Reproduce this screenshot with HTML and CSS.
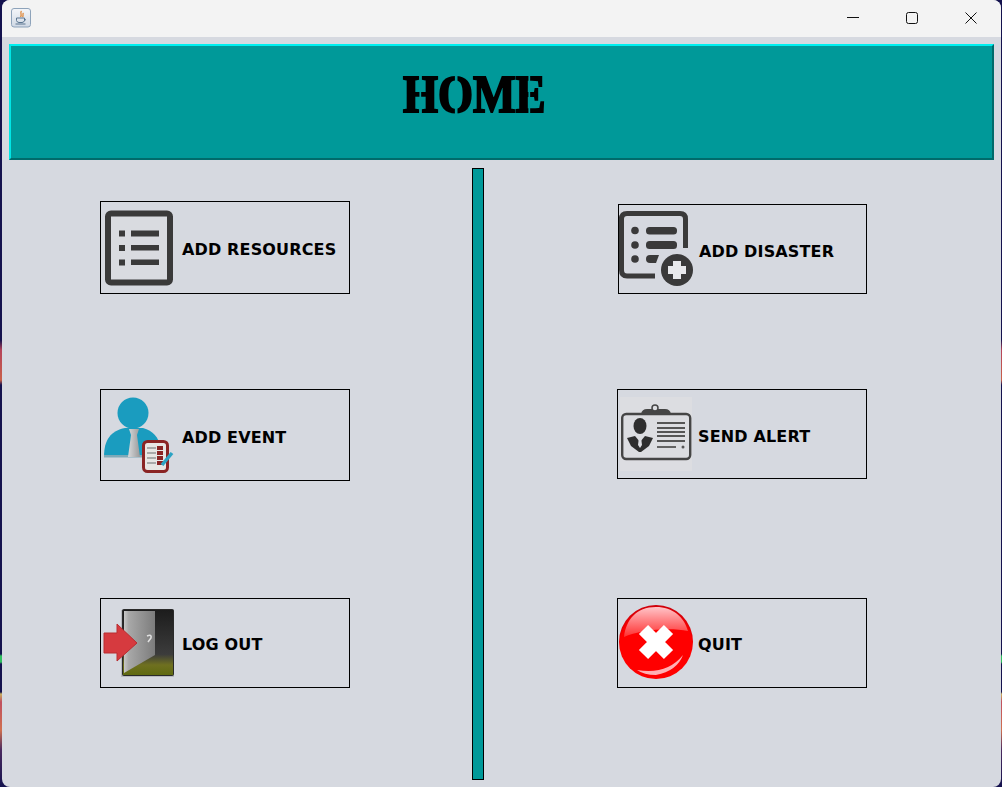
FILE: index.html
```html
<!DOCTYPE html>
<html lang="en">
<head>
<meta charset="utf-8">
<title>Home</title>
<link rel="stylesheet" href="styles.css">
</head>
<body>
<div class="window">
  <div class="titlebar">
    <svg class="app-icon" width="20" height="20" viewBox="0 0 20 20">
      <defs><linearGradient id="ja" x1="0" y1="0" x2="0" y2="1"><stop offset="0" stop-color="#f4f6f9"/><stop offset="1" stop-color="#cfd8e4"/></linearGradient></defs>
      <rect x="0.5" y="0.5" width="19" height="18.5" rx="2.5" fill="url(#ja)" stroke="#8ea3ba"/>
      <path d="M10.5 3 C8.5 5 11.5 6 9.5 9 M12.5 5 C11 6.5 13 7 11.5 9" fill="none" stroke="#e08a3c" stroke-width="1.3"/>
      <path d="M5.5 10 H13.5 V12.5 Q13 14.5 11 14.5 H8 Q6 14.5 5.5 12.5 Z M13.5 10.5 Q15.5 11 13.5 13" fill="none" stroke="#5a7590" stroke-width="1"/>
      <path d="M4.5 16 H14.5" stroke="#5a7590" stroke-width="1"/>
    </svg>
    <div class="controls">
      <svg class="ctl" width="12" height="12" viewBox="0 0 12 12"><path d="M0 5.5H12" stroke="#111"/></svg>
      <svg class="ctl" width="12" height="12" viewBox="0 0 12 12"><rect x="0.5" y="0.5" width="11" height="11" rx="2" fill="none" stroke="#111"/></svg>
      <svg class="ctl" width="12" height="12" viewBox="0 0 12 12"><path d="M0.5 0.5L11.5 11.5M11.5 0.5L0.5 11.5" stroke="#111"/></svg>
    </div>
  </div>

  <header class="banner"><h1 class="title">HOME</h1></header>

  <main class="panels">
    <section class="col col-left">
      <div class="btn b-res">
        <svg class="ico" viewBox="0 0 80 80"><rect x="7" y="5.5" width="62" height="69" rx="3" fill="#d9dbe0" stroke="#3a3a3a" stroke-width="6"/><path d="M18 22.5h6v6h-6zM18 37h6v6h-6zM18 51.5h6v6h-6zM30 22.5h28v6H30zM30 37h28v5.500H30zM30 51.500h28v5.500H30z" fill="#3a3a3a"/></svg>
        <span class="lbl">ADD RESOURCES</span>
      </div>
      <div class="btn b-event">
        <svg class="ico" viewBox="0 0 80 80">
          <defs><linearGradient id="tie" x1="0" y1="0" x2="1" y2="0"><stop offset="0" stop-color="#d8dadc"/><stop offset="1" stop-color="#9a9a9a"/></linearGradient></defs>
          <circle cx="32" cy="18" r="15.500" fill="#1a9cbf"/>
          <path d="M3 62 C3 44 10 36 24 33 L42 33 C52 36 58 42 59 52 L59 62 Z" fill="#1a9cbf"/>
          <path d="M3 60h56v2.500H3z" fill="#7ea9b8"/>
          <path d="M28 34H38L36 40 39 62H27L30 40Z" fill="url(#tie)"/>
          <rect x="42.500" y="46.500" width="24" height="30" rx="4" fill="#e8e6e4" stroke="#8a2424" stroke-width="3"/>
          <path d="M46 52h9v2h-9zM46 57h9v2h-9zM46 62h9v2h-9zM46 67h9v2h-9z" fill="#a9a9a9"/>
          <path d="M56 51h6v4h-6zM56 56h6v4h-6zM56 61h6v4h-6zM56 66h6v4h-6z" fill="#8a2424"/>
          <path d="M61 70L71 58" stroke="#2ba3c4" stroke-width="3.500"/>
        </svg>
        <span class="lbl">ADD EVENT</span>
      </div>
      <div class="btn b-out">
        <svg class="ico" viewBox="0 0 80 80">
          <defs>
            <linearGradient id="dr" x1="0" y1="0" x2="0" y2="1"><stop offset="0" stop-color="#1c1c1c"/><stop offset="0.68" stop-color="#3c3c3c"/><stop offset="0.84" stop-color="#6f7020"/><stop offset="1" stop-color="#5f6a10"/></linearGradient>
            <linearGradient id="pn" x1="0" y1="0" x2="1" y2="0"><stop offset="0" stop-color="#c8c8c8"/><stop offset="0.15" stop-color="#a8a8a8"/><stop offset="1" stop-color="#7c7c7c"/></linearGradient>
          </defs>
          <rect x="20" y="7" width="53" height="67" fill="#b8bac0"/>
          <rect x="21.500" y="6.500" width="51" height="66" rx="1" fill="url(#dr)" stroke="#2a2a2a"/>
          <path d="M23 8H54V52L23 70Z" fill="url(#pn)"/>
          <path d="M46 33q5-2 4 2l-3 4" fill="none" stroke="#e0e0e0" stroke-width="1.600"/>
          <path d="M3 30H16V21L36 40 16 58V50H3Z" fill="#d63a3f" stroke="#b92c30"/>
        </svg>
        <span class="lbl">LOG OUT</span>
      </div>
    </section>

    <div class="rail"></div>

    <section class="col col-right">
      <div class="btn b-dis">
        <svg class="ico" viewBox="0 0 80 80">
          <path d="M36 67H8Q2.500 67 2.500 61V10Q2.500 4.500 8 4.500H61Q66.500 4.500 66.500 10V39" fill="none" stroke="#3a3a3a" stroke-width="5"/>
          <path d="M0 8h3v52H0z" fill="#3a3a3a"/>
          <circle cx="16" cy="21.500" r="3.800" fill="#3a3a3a"/><circle cx="16" cy="36" r="3.800" fill="#3a3a3a"/><circle cx="16" cy="50" r="3.800" fill="#3a3a3a"/>
          <rect x="27" y="18" width="31" height="7.500" rx="3.500" fill="#3a3a3a"/>
          <rect x="27" y="32" width="31" height="8" rx="3.500" fill="#3a3a3a"/>
          <path d="M27 50q0-4 4-4h9l-3 8h-6q-4 0-4-4z" fill="#3a3a3a"/>
          <circle cx="58" cy="61" r="16" fill="#3a3a3a"/>
          <path d="M54 52h8v5h5v8h-5v5h-8v-5h-5v-8h5z" fill="#e8e9ec"/>
        </svg>
        <span class="lbl">ADD DISASTER</span>
      </div>
      <div class="btn b-alert">
        <svg class="ico" viewBox="0 0 80 80">
          <rect x="2" y="3" width="72" height="74" fill="#dcdde1"/>
          <rect x="4.200" y="20" width="68" height="45" rx="4" fill="none" stroke="#454545" stroke-width="2.400"/>
          <path d="M23 20q1-5 6-5H47q5 0 6 5z" fill="#454545"/>
          <circle cx="37" cy="14" r="3" fill="#dcdde1" stroke="#454545" stroke-width="1.500"/>
          <ellipse cx="22" cy="32" rx="6.500" ry="8" fill="#2e2e2e"/>
          <path d="M9 44L17 42 22 48 27 42 35 44 31 52 23 58H21L13 52Z" fill="#2e2e2e"/>
          <path d="M21 43h2l1 8-2 3-2-3z" fill="#dcdde1"/>
          <path d="M39 29H67M39 34H67M39 38H67M39 42H67M39 47H67" stroke="#555" stroke-width="1.800"/>
          <path d="M39 53H58" stroke="#555" stroke-width="1.800"/>
          <circle cx="65" cy="53" r="1.500" fill="#555"/>
        </svg>
        <span class="lbl">SEND ALERT</span>
      </div>
      <div class="btn b-quit">
        <svg class="ico" viewBox="0 0 80 80">
          <defs>
            <radialGradient id="rd" cx="0.5" cy="0.55" r="0.55"><stop offset="0" stop-color="#f00"/><stop offset="0.88" stop-color="#f00"/><stop offset="1" stop-color="#c4000c"/></radialGradient>
            <linearGradient id="gl" x1="0" y1="0" x2="0" y2="1"><stop offset="0" stop-color="#ffc4c8"/><stop offset="1" stop-color="#ff3030"/></linearGradient>
          </defs>
          <circle cx="38" cy="39" r="37" fill="url(#rd)"/>
          <path d="M38 4C18 4 8 17 6 34 21 27 51 24 70 28 66 14 55 4 38 4Z" fill="url(#gl)"/>
          <path d="M19 67Q49 72 65 52 59 68 38 72 26 72 19 67Z" fill="#ffb0b4"/>
          <path d="M25.500 26.500L50.500 51.500M50.500 26.500L25.500 51.500" stroke="#fff" stroke-width="13"/>
        </svg>
        <span class="lbl lbl-low">QUIT</span>
      </div>
    </section>
  </main>
</div>
</body>
</html>
```
FILE: styles.css
```css
* { box-sizing: border-box; }
html, body { margin: 0; height: 100%; overflow: hidden; }
body {
  width: 1002px;
  height: 787px;
  background: linear-gradient(to bottom,
    #14124e 0, #14124e 340px, #b5445a 350px, #c9604a 380px, #14124e 385px,
    #14124e 654px, #30c060 656px, #30c060 662px, #14124e 664px,
    #14124e 692px, #c8b060 694px, #c05060 702px, #d07050 730px, #4a2a60 750px, #14124e 787px);
}
.window {
  margin-left: 2px;
  width: 999px;
  height: 787px;
  background: #d6d9e0;
  border-radius: 8px;
  overflow: hidden;
  font-family: "DejaVu Sans", sans-serif;
}
.titlebar {
  height: 37px;
  background: #f3f3f3;
  display: flex;
  align-items: center;
  justify-content: space-between;
  padding: 0 24px 2px 9px;
}
.app-icon { display: block; margin-top: 1px; }
.controls { display: flex; gap: 47px; }
.ctl { display: block; }
.banner {
  margin: 7px 7px 0;
  height: 116px;
  background: #009999;
  border-style: solid;
  border-width: 2px;
  border-color: #00f0f0 #006b6b #006b6b #00e6e6;
  display: flex;
  align-items: center;
  padding: 0 0 14px 392px;
}
.title {
  position: relative;
  margin: 0;
  font: bold 52px/1 "Liberation Serif", serif;
  color: #000;
  white-space: nowrap;
  letter-spacing: 0;
  -webkit-text-stroke: 2px #000;
  transform: scaleX(0.865);
  transform-origin: 0 50%;
}
.title::after {
  content: "";
  position: absolute;
  inset: 0;
  background:
    linear-gradient(#009999, #009999) 11.5% 0 / 2px 100% no-repeat,
    linear-gradient(#009999, #009999) 37.4% 0 / 3px 100% no-repeat,
    linear-gradient(#009999, #009999) 89% 0 / 2px 100% no-repeat;
}
.panels { display: flex; height: 627px; }
.col { display: flex; flex-direction: column; }
.col-left { width: 470px; padding-left: 98px; }
.col-left .ico { margin-right: 1px; }
.col-right { flex: 1; padding-left: 133px; }
.rail {
  width: 12px;
  height: 612px;
  margin-top: 8px;
  background: #009999;
  border: 1px solid #000;
  flex: none;
}
.btn {
  display: flex;
  align-items: center;
  border: 1px solid #000;
  flex: none;
  width: 250px;
  height: 90px;
}
.ico { width: 80px; height: 80px; flex: none; display: block; }
.lbl { font-size: 16px; font-weight: bold; letter-spacing: 0.15px; color: #000; white-space: nowrap; position: relative; top: 2px; }
.b-out .lbl, .lbl-low { top: 1px; }
.b-res { height: 93px; margin-top: 41px; }
.b-event { height: 92px; margin-top: 95px; }
.b-out { margin-top: 117px; }
.b-dis { margin-top: 44px; margin-left: 1px; width: 249px; }
.b-alert { margin-top: 95px; }
.b-quit { margin-top: 119px; }
```
